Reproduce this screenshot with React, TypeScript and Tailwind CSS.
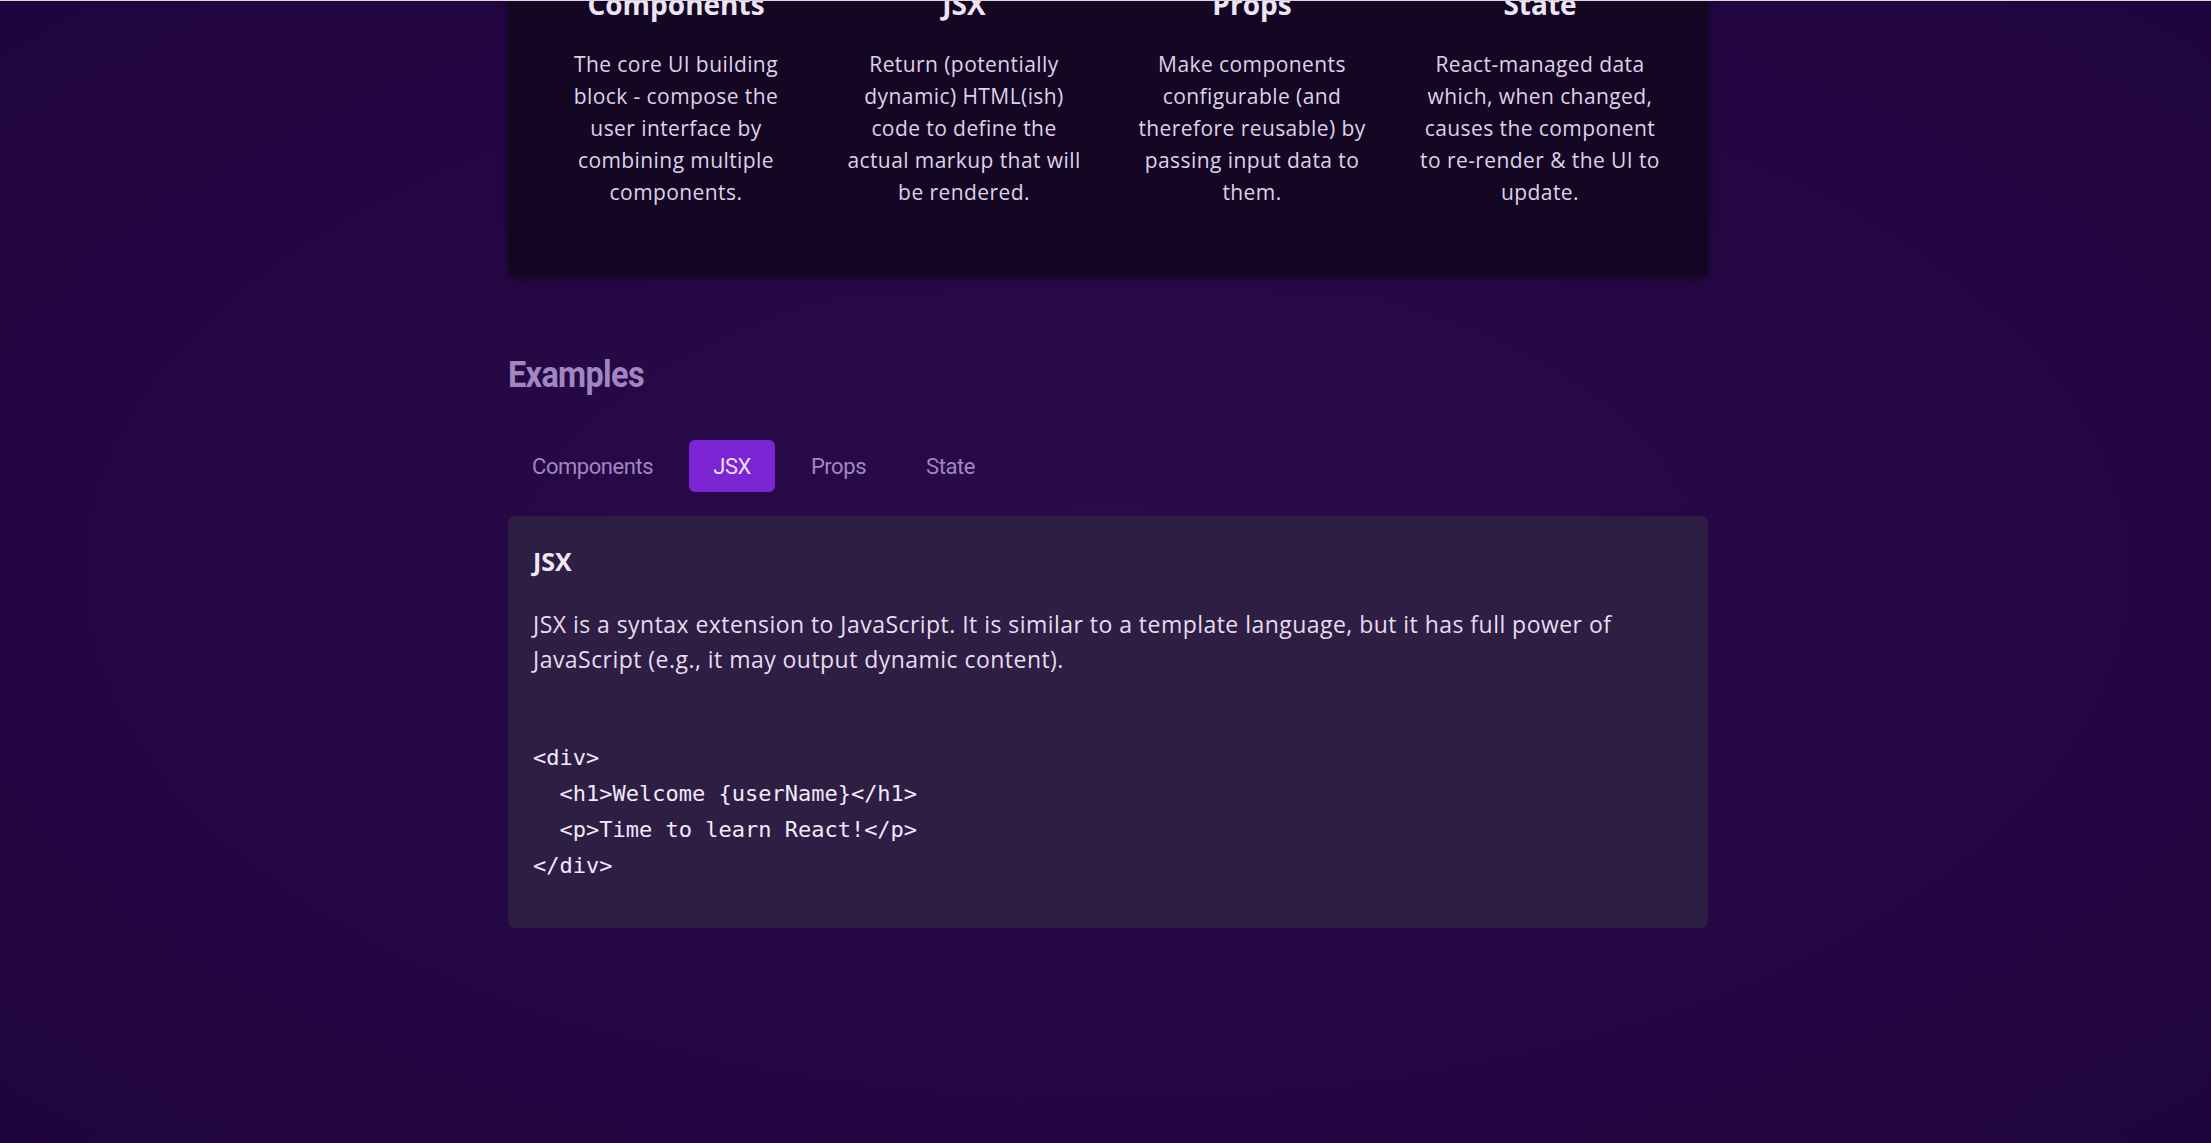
const concepts = [
	{
		title: 'Components',
		description:
			'The core UI building block - compose the user interface by combining multiple components.',
	},
	{
		title: 'JSX',
		description:
			'Return (potentially dynamic) HTML(ish) code to define the actual markup that will be rendered.',
	},
	{
		title: 'Props',
		description:
			'Make components configurable (and therefore reusable) by passing input data to them.',
	},
	{
		title: 'State',
		description:
			'React-managed data which, when changed, causes the component to re-render & the UI to update.',
	},
]

const tabs = ['Components', 'JSX', 'Props', 'State']

const code = `<div>
  <h1>Welcome {userName}</h1>
  <p>Time to learn React!</p>
</div>`

function CoreConcepts() {
	return (
		<section className="mt-[-47px] rounded-md bg-[#150624] px-8 pt-8 pb-[69px] shadow-[0_2px_8px_rgba(0,0,0,0.35)]">
			<ul className="flex justify-center gap-[44px]">
				{concepts.map((item) => (
					<li key={item.title} className="w-[244px] text-center">
						<h3 className="text-[28px] leading-[36px] font-bold text-[#ece4f4]">
							{item.title}
						</h3>
						<p className="mt-[26px] text-[21px] leading-[32px] tracking-[0.02em] text-[#ddd2e9]">
							{item.description}
						</p>
					</li>
				))}
			</ul>
		</section>
	)
}

function Examples() {
	const active = 'JSX'
	return (
		<section className="mt-[78px]">
			<h2 className="inline-block origin-left scale-x-[0.9] font-['Roboto',sans-serif] text-[36px] leading-[40px] font-bold tracking-[-0.02em] text-[#a186c1]">
				Examples
			</h2>
			<menu className="mt-[45px] flex gap-3">
				{tabs.map((tab) => (
					<button
						key={tab}
						className={
							tab === active
								? "h-[52px] rounded-md bg-[#7a24d4] px-6 font-['Roboto',sans-serif] text-[22px] tracking-[-0.02em] text-[#ecdff8]"
								: "h-[52px] rounded-md px-6 font-['Roboto',sans-serif] text-[22px] tracking-[-0.02em] text-[#a086c2]"
						}
					>
						{tab}
					</button>
				))}
			</menu>
			<div className="mt-6 rounded-md bg-[#2f1e44] px-[25px] pt-[29px] pb-[44px]">
				<h3 className="text-[25px] leading-[32px] font-bold text-[#efe8f6]">
					JSX
				</h3>
				<p className="mt-[30px] text-[23px] leading-[35px] tracking-[0.02em] text-[#e6dcef]">
					JSX is a syntax extension to JavaScript. It is similar to a template
					language, but it has full power of JavaScript (e.g., it may output
					dynamic content).
				</p>
				<pre className="mt-[63px] font-['DejaVu_Sans_Mono',monospace] text-[22px] leading-[36px] text-[#f1e9f9]">
					<code className="block font-['DejaVu_Sans_Mono',monospace] text-[22px] leading-[36px]">
						{code}
					</code>
				</pre>
			</div>
		</section>
	)
}

export default function App() {
	return (
		<div className="min-h-[1143px] w-full overflow-hidden border-t border-[#d9d9d9] bg-[radial-gradient(#2a0b4b,#20043d)] pl-[5px] font-['Open_Sans',sans-serif]">
			<main className="mx-auto w-[1200px]">
				<CoreConcepts />
				<Examples />
			</main>
		</div>
	)
}
